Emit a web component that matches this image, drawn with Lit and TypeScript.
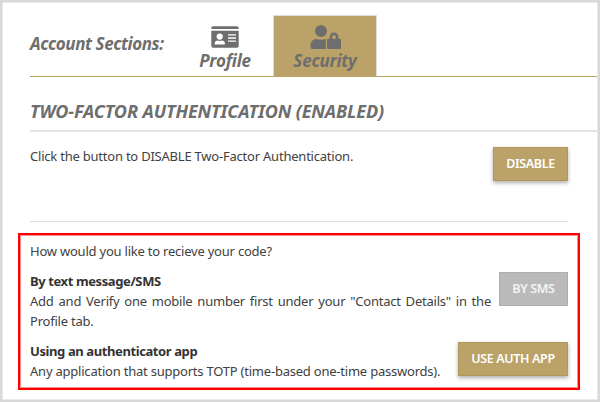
import { LitElement, html, css, svg } from "lit";
import { customElement } from "lit/decorators.js";

const profileIcon = svg`<svg class="icon" width="28" height="22" viewBox="0 0 28 22">
  <path fill="#6e6e6e" fill-rule="evenodd" d="M0.3 3V2a1.7 1.7 0 0 1 1.700-1.700h24a1.700 1.700 0 0 1 1.700 1.700V3zM.3 4.700h27.400V20a1.700 1.700 0 0 1-1.700 1.700H2A1.700 1.700 0 0 1 .3 20zM8.700 7.500a3.100 3.100 0 1 0 0 6.200a3.100 3.100 0 0 0 0-6.200zM3.700 18.400h10.200v-.9c0-1.700-1.300-2.900-3-2.900c-1 .6-3.200.6-4.200 0c-1.700 0-3 1.200-3 2.900zM17 8.200h8v1.400h-8zM17 11.300h8v1.400h-8zM17 14.400h8v1.400h-8z"/>
</svg>`;

const securityIcon = svg`<svg class="icon" width="31" height="25" viewBox="0 0 31 25">
  <g fill="#6e6e6e"><circle cx="11" cy="6" r="6"/>
  <path d="M.6 22.500V20.200c0-3.500 2.500-6.100 6-6.100c2.500 1 6 1 8.700 0l.5.100v9.800H2.200c-1 0-1.600-.6-1.600-1.500z"/>
  <path fill-rule="evenodd" d="M17 15a1.300 1.300 0 0 1 1.300-1.300h1.400v-1.900a4.300 4.300 0 0 1 8.600 0v1.900h1.400a1.300 1.300 0 0 1 1.300 1.300v7.700a1.300 1.300 0 0 1-1.300 1.300H18.300a1.300 1.300 0 0 1-1.300-1.300zM22.200 13.700h3.600v-1.900a1.800 1.800 0 0 0-3.600 0z"/></g>
</svg>`;

@customElement("app-root")
export class AppRoot extends LitElement {
  static styles = css`
    :host { display: block; }
    * { box-sizing: border-box; }
    .page { width: 600px; height: 402px; background: #fff; border: 2px solid #d8d8d8; box-shadow: inset 0 0 0 1px #e9e9e9; overflow: hidden; font: 13px/20px "Noto Sans", sans-serif; letter-spacing: -.22px; color: #414141; }
    .tabs { display: flex; align-items: flex-end; margin: 0 1px 0 28px; height: 75px; padding-top: 13px; border-bottom: 1px solid #b9a05f; font-size: 17px; font-weight: 700; font-style: italic; color: #6e6e6e; }
    .label { width: 146px; height: 61px; padding-top: 18px; line-height: 22px; letter-spacing: -.43px; white-space: nowrap; }
    .tab { height: 61px; text-align: center; line-height: 20px; display: flex; flex-direction: column; align-items: center; justify-content: flex-end; padding-bottom: 5px; }
    .profile { width: 97px; padding-left: 1px; }
    .active { width: 104px; background: #bba268; border: 1px solid #ddd; border-bottom: 0; }
    .icon { display: block; flex: none; margin-bottom: 1px; }
    .profile .icon { margin-bottom: 3px; }
    .heading { margin: 0 1px 0 28px; height: 55px; padding-top: 22px; line-height: 24px; border-bottom: 2px solid #e3e3e3; font-size: 18px; font-weight: 700; font-style: italic; letter-spacing: -.13px; color: #6e6e6e; white-space: nowrap; }
    .status { display: flex; justify-content: space-between; align-items: flex-start; margin: 0 30px 0 28px; padding-top: 15px; height: 90px; border-bottom: 1px solid #dedede; }
    .btn { flex: none; display: flex; align-items: center; justify-content: center; width: 75px; height: 34px; padding: 0; border: 1px solid #b0975a; background: #bba268; color: #fff; font: 600 12.5px/20px "Noto Sans", sans-serif; letter-spacing: -.35px; box-shadow: 0 2px 4px rgba(0,0,0,.32); white-space: nowrap; }
    .off { width: 69px; background: #bababa; border-color: #aeaeae; color: #f4f4f4; box-shadow: none; }
    .wide { width: 110px; }
    .choices { margin: 11px 18px 0 16px; height: 157px; border: 2px solid #f00; box-shadow: inset 0 0 0 1px #ff9090; padding: 6px 10px; }
    p { margin: 0; }
    .status p { white-space: nowrap; margin-top: -1px; }
    .row { display: flex; justify-content: space-between; margin-top: 10px; }
    .row .btn { margin-top: 1px; }
    .copy { width: 461px; }
    .just { text-align: justify; }
    .line { width: auto; white-space: nowrap; }
    .copy b { display: block; color: #333; letter-spacing: -.4px; }
  `;

  render() {
    return html`<main class="page">
      <nav class="tabs">
        <span class="label">Account Sections:</span>
        <a class="tab profile">${profileIcon}<span>Profile</span></a>
        <a class="tab active">${securityIcon}<span>Security</span></a>
      </nav>
      <div class="heading">TWO-FACTOR AUTHENTICATION (ENABLED)</div>
      <section class="status">
        <p>Click the button to DISABLE Two-Factor Authentication.</p>
        <button class="btn">DISABLE</button>
      </section>
      <section class="choices">
        <p>How would you like to recieve your code?</p>
        <div class="row">
          <div class="copy"><b>By text message/SMS</b>
            <p class="just">Add and Verify one mobile number first under your "Contact Details" in the Profile tab.</p></div>
          <button class="btn off">BY SMS</button>
        </div>
        <div class="row">
          <div class="copy line"><b>Using an authenticator app</b>
            <p>Any application that supports TOTP (time-based one-time passwords).</p></div>
          <button class="btn wide">USE AUTH APP</button>
        </div>
      </section>
    </main>`;
  }
}
